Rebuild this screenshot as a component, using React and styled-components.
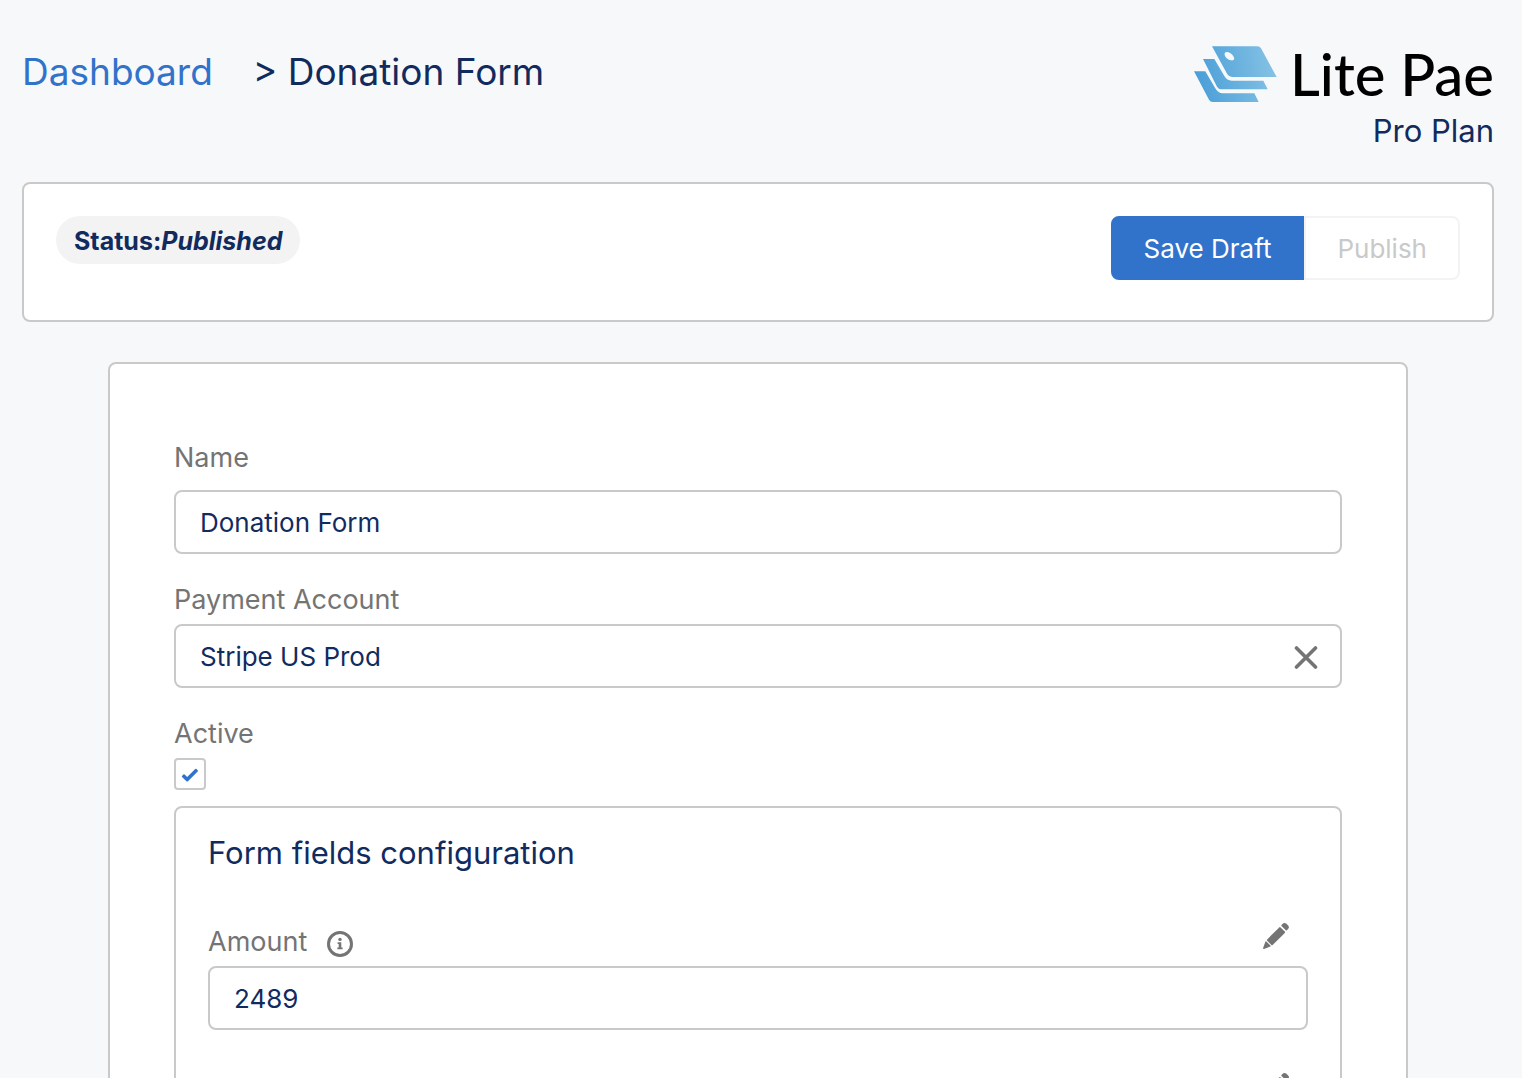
import React, { useState } from 'react';
import styled, { createGlobalStyle } from 'styled-components';

const GlobalStyle = createGlobalStyle`
  * {
    box-sizing: border-box;
  }

  body {
    margin: 0;
    background: #f7f8fa;
    color: #112b5e;
    font-family: Inter, "Liberation Sans", sans-serif;
  }

  button,
  input {
    font-family: inherit;
  }
`;

const Page = styled.div`
  height: 100vh;
  overflow: hidden;
  padding: 40px 28px 0 22px;
`;

const Header = styled.header`
  display: flex;
  justify-content: space-between;
  align-items: flex-start;
  height: 142px;
`;

const Breadcrumb = styled.nav`
  display: flex;
  gap: 40px;
  font-size: 37px;
  line-height: 64px;
`;

const BreadcrumbLink = styled.a`
  color: #3173cb;
  text-decoration: none;
`;

const Brand = styled.div`
  display: flex;
  flex-direction: column;
  align-items: flex-end;
`;

const BrandName = styled.div`
  display: flex;
  align-items: center;
  gap: 13px;
  color: #000;
  font-family: Lato, sans-serif;
  font-size: 58px;
  font-weight: 500;
  line-height: 68px;
`;

const Plan = styled.div`
  font-size: 31px;
  line-height: 46px;
`;

const Card = styled.section`
  background: #fff;
  border: 2px solid #c9c9c9;
  border-radius: 8px;
`;

const Toolbar = styled(Card)`
  display: flex;
  justify-content: space-between;
  align-items: flex-start;
  padding: 32px 32px 40px;
`;

const Status = styled.div`
  padding: 2px 18px 0;
  border-radius: 24px;
  background: #f3f3f3;
  font-size: 25px;
  font-weight: 700;
  line-height: 46px;
`;

const ButtonGroup = styled.div`
  display: flex;
`;

const Button = styled.button`
  height: 64px;
  padding: 0 31px;
  border: 2px solid ${(props) => (props.$primary ? '#3173cb' : '#f3f3f3')};
  border-radius: ${(props) => (props.$primary ? '8px 0 0 8px' : '0 8px 8px 0')};
  background: ${(props) => (props.$primary ? '#3173cb' : '#fff')};
  color: ${(props) => (props.$primary ? '#fff' : '#c9c9c9')};
  font-size: 26px;
`;

const FormCard = styled(Card)`
  margin: 40px 86px 0;
  padding: 72px 64px 64px;
`;

const Field = styled.div`
  margin-bottom: ${(props) => props.$space || '24px'};
`;

const Label = styled.label`
  display: block;
  margin-bottom: ${(props) => props.$gap || '2px'};
  color: #747474;
  font-size: 27px;
  line-height: 44px;
`;

const InputBox = styled.div`
  display: flex;
  align-items: center;
  height: 64px;
  padding: 2px 22px 0 24px;
  border: 2px solid #c9c9c9;
  border-radius: 8px;
  background: #fff;
`;

const Input = styled.input`
  flex: 1;
  min-width: 0;
  padding: 0;
  border: 0;
  outline: 0;
  background: transparent;
  color: #112b5e;
  font-size: 26px;
  line-height: 40px;
`;

const IconButton = styled.button`
  display: flex;
  padding: 0;
  border: 0;
  background: transparent;
  color: #747474;
`;

const CheckWrapper = styled.div`
  position: relative;
  width: 32px;
  height: 32px;

  svg {
    position: absolute;
    inset: 0;
    pointer-events: none;
  }
`;

const Checkbox = styled.input`
  appearance: none;
  display: block;
  width: 32px;
  height: 32px;
  margin: 0;
  border: 2px solid #c9c9c9;
  border-radius: 4px;
  background: #fff;
`;

const Panel = styled(Card)`
  padding: 24px 32px 32px;
`;

const PanelTitle = styled.h2`
  margin: 0 0 46px;
  font-size: 31px;
  font-weight: 400;
  line-height: 42px;
`;

const FieldHeader = styled.div`
  display: flex;
  align-items: flex-start;
  gap: 20px;
  height: 46px;
  padding-right: 18px;

  ${IconButton}:last-child {
    margin: 2px 0 0 auto;
  }
`;

const InfoButton = styled(IconButton)`
  margin-top: 11px;
`;

function Logo() {
  return (
    <svg width="83" height="57" viewBox="42 47 249 171" aria-hidden="true">
      <defs>
        <linearGradient id="logoFill" gradientUnits="userSpaceOnUse" x1="50" y1="130" x2="280" y2="100">
          <stop offset="0" stopColor="#4b9fd8" />
          <stop offset="1" stopColor="#83c1e4" />
        </linearGradient>
      </defs>
      <g fill="url(#logoFill)">
        <path
          fillRule="evenodd"
          d="M96 48H232Q239 48 243 54L290 140H156Q147 140 142 132ZM135 67C130 73 140 89 153 90C161 91 165 87 161 79C156 69 140 62 135 67Z"
        />
        <path d="M69 86H103L133 137Q141 151 155 151H250L263 177H124Q116 177 111 169Z" />
        <path d="M42 123H76L104 171Q114 189 128 189H223L236 215H98Q91 215 87 208Z" />
      </g>
    </svg>
  );
}

function PencilIcon() {
  return (
    <svg width="28" height="28" viewBox="0 0 28 28" fill="currentColor" aria-hidden="true">
      <path d="M17.2 5.4Q17.9 4.8 18.6 5.4L22.8 9.6Q23.4 10.3 22.8 11L10.6 23Q10 23.5 9.4 23L5.2 18.8Q4.6 18.1 5.2 17.4Z" />
      <path d="M19.5 3L21.3 1.3Q22.8 .4 24.2 1.6L26.4 3.8Q27.5 5.2 26.5 6.5L24.8 8.3Q24.3 8.7 23.8 8.2L19.5 4Q19.1 3.5 19.5 3Z" />
      <path d="M3.5 19.4Q3.9 19.1 4.4 19.5L8.6 23.7Q9 24.3 8.4 24.6L2 26.9Q.8 27.1 1.1 25.9Z" />
    </svg>
  );
}

function InfoIcon() {
  return (
    <svg width="26" height="26" viewBox="0 0 26 26" fill="currentColor" aria-hidden="true">
      <circle cx="13" cy="13" r="11.5" fill="none" stroke="currentColor" strokeWidth="3" />
      <circle cx="13" cy="8.4" r="1.7" />
      <path d="M10.6 11.2H14.3V16.4H15.6V18.2H10.3V16.4H11.7V13H10.6Z" />
    </svg>
  );
}

export default function App() {
  const [name, setName] = useState('Donation Form');
  const [account, setAccount] = useState('Stripe US Prod');
  const [active, setActive] = useState(true);
  const [amount, setAmount] = useState('2489');

  return (
    <>
      <GlobalStyle />
      <Page>
        <Header>
          <Breadcrumb>
            <BreadcrumbLink href="#dashboard">Dashboard</BreadcrumbLink>
            <span>&gt; Donation Form</span>
          </Breadcrumb>
          <Brand>
            <BrandName>
              <Logo />
              <span>Lite Pae</span>
            </BrandName>
            <Plan>Pro Plan</Plan>
          </Brand>
        </Header>
        <Toolbar>
          <Status>
            Status:<em>Published</em>
          </Status>
          <ButtonGroup>
            <Button type="button" $primary>
              Save Draft
            </Button>
            <Button type="button" disabled>
              Publish
            </Button>
          </ButtonGroup>
        </Toolbar>
        <FormCard as="form">
          <Field>
            <Label htmlFor="name" $gap="10px">
              Name
            </Label>
            <InputBox>
              <Input id="name" value={name} onChange={(e) => setName(e.target.value)} />
            </InputBox>
          </Field>
          <Field>
            <Label htmlFor="account">Payment Account</Label>
            <InputBox>
              <Input id="account" value={account} onChange={(e) => setAccount(e.target.value)} />
              <IconButton type="button" aria-label="Clear" onClick={() => setAccount('')}>
                <svg width="24" height="24" viewBox="0 0 24 24" stroke="currentColor" strokeWidth="3.6" strokeLinecap="round">
                  <path d="M2.5 3L21.5 22M21.5 3L2.5 22" />
                </svg>
              </IconButton>
            </InputBox>
          </Field>
          <Field $space="16px">
            <Label htmlFor="active">Active</Label>
            <CheckWrapper>
              <Checkbox
                id="active"
                type="checkbox"
                checked={active}
                onChange={(e) => setActive(e.target.checked)}
              />
              {active && (
                <svg width="32" height="32" viewBox="0 0 32 32" fill="#3173cb">
                  <path d="M8 18L9.4 16.5Q10 16 10.6 16.5L13.2 19L21.2 11Q21.9 10.4 22.5 11L23.7 12.2Q24.3 12.9 23.7 13.6L14 23.2Q13.2 23.9 12.4 23.2L8 19.1Q7.5 18.5 8 18Z" />
                </svg>
              )}
            </CheckWrapper>
          </Field>
          <Panel>
            <PanelTitle>Form fields configuration</PanelTitle>
            <Field $space="40px">
              <FieldHeader>
                <Label htmlFor="amount">Amount</Label>
                <InfoButton type="button" aria-label="About this field">
                  <InfoIcon />
                </InfoButton>
                <IconButton type="button" aria-label="Edit amount">
                  <PencilIcon />
                </IconButton>
              </FieldHeader>
              <InputBox>
                <Input id="amount" value={amount} onChange={(e) => setAmount(e.target.value)} />
              </InputBox>
            </Field>
            <FieldHeader>
              <IconButton type="button" aria-label="Edit field">
                <PencilIcon />
              </IconButton>
            </FieldHeader>
          </Panel>
        </FormCard>
      </Page>
    </>
  );
}
